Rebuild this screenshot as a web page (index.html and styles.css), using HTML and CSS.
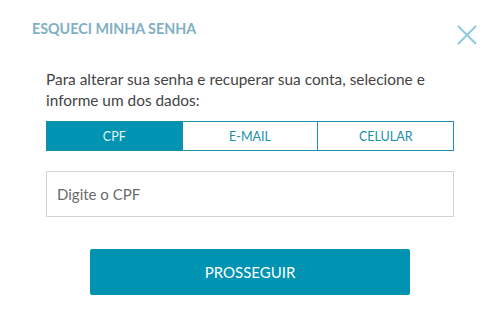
FILE: index.html
```html
<!DOCTYPE html>
<html lang="pt-BR">
<head>
<meta charset="utf-8">
<title>Esqueci minha senha</title>
<link rel="stylesheet" href="styles.css">
</head>
<body>
<div class="modal">
  <div class="header">
    <h1 class="title">ESQUECI MINHA SENHA</h1>
    <button class="close" aria-label="Fechar">
      <svg width="20" height="20" viewBox="0 0 20 20"><path d="M1 1 L19 19 M19 1 L1 19" stroke="#8ccbdc" stroke-width="2" fill="none"/></svg>
    </button>
  </div>
  <div class="content">
    <p class="intro">Para alterar sua senha e recuperar sua conta, selecione e informe um dos dados:</p>
    <div class="tabs">
      <div class="tab active">CPF</div>
      <div class="tab">E-MAIL</div>
      <div class="tab">CELULAR</div>
    </div>
    <input class="field" type="text" placeholder="Digite o CPF">
    <div class="actions">
      <button class="submit">PROSSEGUIR</button>
    </div>
  </div>
</div>
</body>
</html>
```
FILE: styles.css
```css
* { box-sizing: border-box; }
html, body { margin: 0; padding: 0; background: #fff; }
body { font-family: Lato, "Open Sans", sans-serif; color: #444; }
.modal { width: 499px; height: 320px; padding: 20px 22px 0 32px; }
.header { display: flex; justify-content: space-between; align-items: flex-start; }
.title { margin: 0; font-size: 14.3px; font-weight: 700; color: #7fafc4; line-height: 18px; }
.close { background: none; border: 0; padding: 0; margin-top: 5px; width: 20px; height: 20px; cursor: pointer; }
.close svg { display: block; }
.content { padding: 24px 23px 0 14px; }
.intro { margin: 0; font-size: 15.4px; line-height: 21px; color: #444; }
.tabs { display: flex; margin-top: 10px; border: 1px solid #1a8fa8; height: 30px; }
.tab { flex: 1; display: flex; align-items: center; justify-content: center; font-size: 12.5px; color: #1a8fa8; }
.tab + .tab { border-left: 1px solid #1a8fa8; }
.tab.active { background: #0093b2; color: #e6f4f8; }
.field { display: block; width: 100%; height: 46px; margin-top: 20px; border: 1px solid #d2d3d9; padding: 0 10px; font-family: inherit; font-size: 15px; color: #444; outline: none; }
.field::placeholder { color: #6b6b6b; }
.actions { display: flex; justify-content: center; margin-top: 32px; }
.submit { width: 320px; height: 46px; border: 0; border-radius: 2px; background: #0093b2; color: #fff; font-family: inherit; font-size: 15px; cursor: pointer; }
```
